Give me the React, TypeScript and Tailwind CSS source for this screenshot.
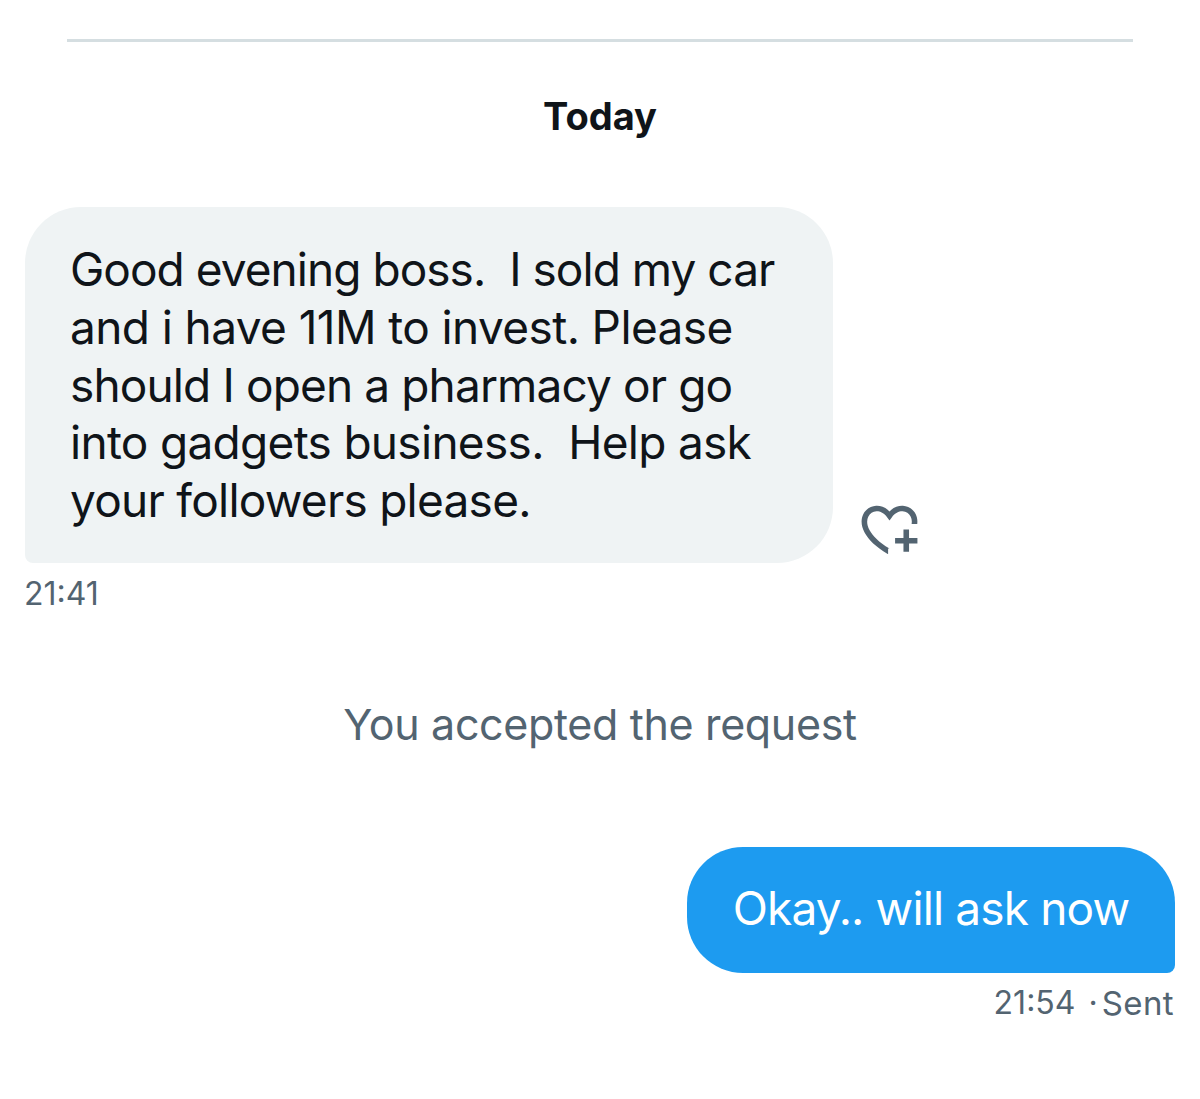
const font = "font-['Inter','Roboto',sans-serif]";

function ReactionIcon() {
  return (
    <svg viewBox="0 0 24 24" className="w-[67px] h-[67px] fill-[#536471]">
      <path d="M17 12v3h-2.998v2h3v3h2v-3h3v-2h-3.001v-3H17zm-5 6.839c-3.871-2.34-6.053-4.639-7.127-6.609-1.112-2.04-1.031-3.7-.479-4.82.561-1.13 1.667-1.84 2.91-1.91 1.222-.06 2.68.51 3.892 2.16l.806 1.09.805-1.09c1.211-1.65 2.668-2.22 3.89-2.16 1.242.07 2.347.78 2.908 1.91.334.677.49 1.554.321 2.59h2.011c.153-1.283-.039-2.469-.539-3.48-.887-1.79-2.647-2.91-4.601-3.01-1.65-.09-3.367.56-4.796 2-1.43-1.44-3.147-2.09-4.798-2-1.954.1-3.714 1.22-4.601 3.01-.896 1.81-.846 4.17.514 6.67 1.353 2.48 4.003 5.12 8.382 7.67V18.84z" />
    </svg>
  );
}

export default function App() {
  return (
    <div className={`w-[1200px] h-[1099px] bg-white flex flex-col overflow-hidden ${font}`}>
      <div className="mx-[67px] mt-[39px] h-[3px] bg-[#d5dee1]" />
      <div className="mt-[51px] text-center text-[38px] leading-[46px] font-bold text-[#0f1419]">Today</div>

      <div className="mt-[68px] ml-[25px] flex items-end">
        <div className="w-[808px] h-[356px] bg-[#eff3f4] rounded-[56px] rounded-bl-[8px] pl-[45px] pt-[34px] text-[46px] leading-[57.75px] text-[#0f1419] whitespace-pre">
          <div className="tracking-[-0.96px]">Good evening boss.  I sold my car</div>
          <div className="tracking-[-0.6px]">and i have 11M to invest. Please</div>
          <div className="tracking-[-0.87px]">should I open a pharmacy or go</div>
          <div className="tracking-[-0.7px]">into gadgets business.  Help ask</div>
          <div className="tracking-[-0.75px]">your followers please.</div>
        </div>
        <div className="ml-[23px]">
          <ReactionIcon />
        </div>
      </div>
      <div className="ml-[24px] mt-[11px] text-[32px] leading-[40px] text-[#536471]">21:41</div>

      <div className="mt-[83px] text-center text-[43px] leading-[54px] tracking-[-0.35px] text-[#536471]">You accepted the request</div>

      <div className="mt-[96px] mr-[25px] flex justify-end">
        <div className="w-[488px] h-[126px] pb-[4px] bg-[#1d9bf0] rounded-[56px] rounded-br-[8px] flex items-center justify-center text-[46px] tracking-[-0.85px] text-white">Okay.. will ask now</div>
      </div>
      <div className="mt-[10px] mr-[26px] flex justify-end text-[32px] leading-[40px] text-[#536471]">
        <span>21:54</span>
        <span className="ml-[13px] mr-[4px]">·</span>
        <span className="text-[33px] tracking-[0.4px]">Sent</span>
      </div>
    </div>
  );
}
